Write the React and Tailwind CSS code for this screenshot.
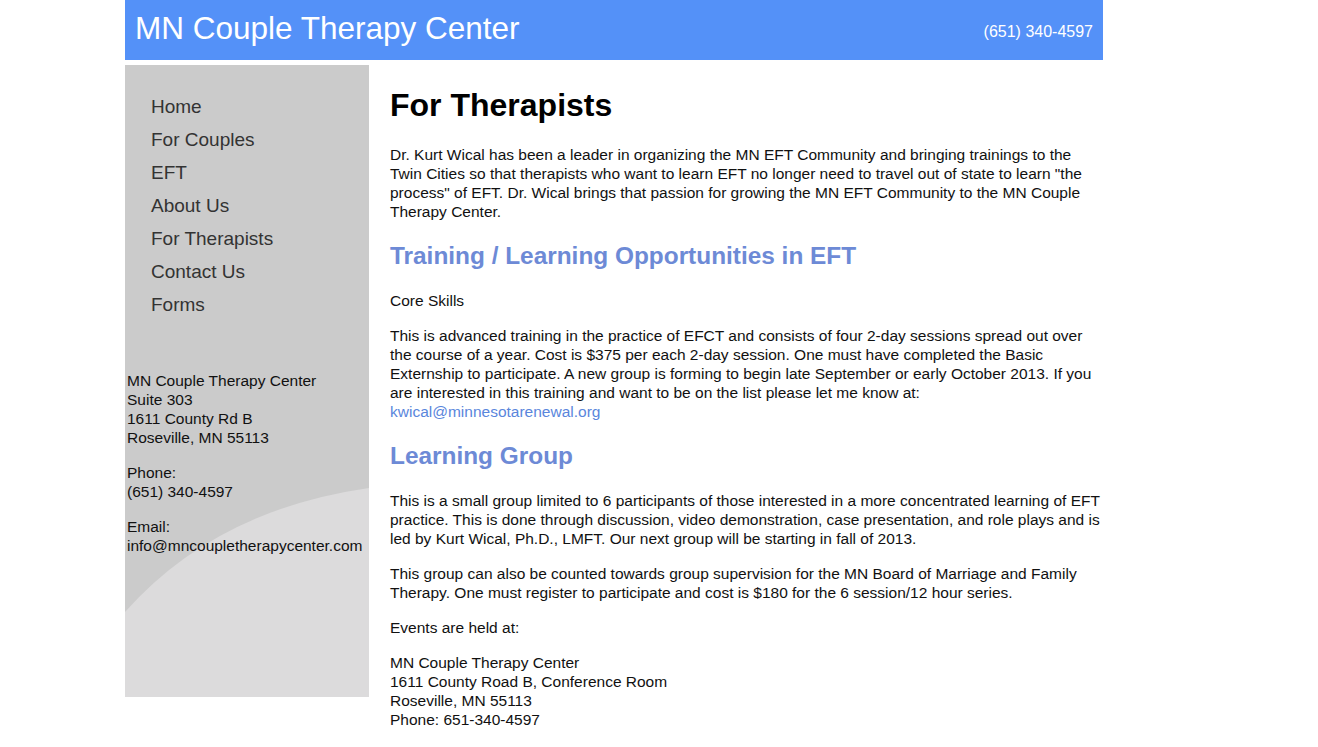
const navItems = ["Home", "For Couples", "EFT", "About Us", "For Therapists", "Contact Us", "Forms"];

const SidebarCurve = () => (
  <svg
    className="absolute inset-0 w-full h-full"
    viewBox="0 0 244 632"
    preserveAspectRatio="none"
    aria-hidden="true"
  >
    <path d="M0,547 Q90,445 244,423 L244,632 L0,632 Z" fill="#dcdbdc" />
  </svg>
);

export default function App() {
  return (
    <div className="min-h-screen bg-white font-['Liberation_Sans',Arial,sans-serif] text-[#111]">
      <div className="ml-[125px] w-[978px]">
        {/* Header */}
        <header className="flex h-[60px] items-center justify-between bg-[#5491f8] pl-[10px] pr-[10px] text-white">
          <h1 className="text-[31.5px] leading-[36px] -mt-[4px]">MN Couple Therapy Center</h1>
          <span className="text-[16px] leading-[19px] mt-[2px]">(651) 340-4597</span>
        </header>

        <div className="mt-[5px] flex items-start">
          {/* Sidebar */}
          <aside className="relative h-[632px] w-[244px] shrink-0 bg-[#cbcbcb]">
            <SidebarCurve />
            <div className="relative">
              <ul className="pt-[25px] pl-[26px]">
                {navItems.map((item) => (
                  <li key={item} className="text-[19px] leading-[33px] text-[#333]">
                    {item}
                  </li>
                ))}
              </ul>
              <div className="mt-[50px] pl-[2px] text-[15.5px] leading-[19px] text-[#111]">
                <p>
                  MN Couple Therapy Center
                  <br />
                  Suite 303
                  <br />
                  1611 County Rd B
                  <br />
                  Roseville, MN 55113
                </p>
                <p className="mt-[16px]">
                  Phone:
                  <br />
                  (651) 340-4597
                </p>
                <p className="mt-[16px]">
                  Email:
                  <br />
                  info@mncoupletherapycenter.com
                </p>
              </div>
            </div>
          </aside>

          {/* Main content */}
          <main className="w-[734px] pl-[21px] text-[15.5px] leading-[19px]">
            <h2 className="mt-[22px] mb-[21px] text-[32px] font-bold leading-[37px] text-black">For Therapists</h2>
            <p>
              Dr. Kurt Wical has been a leader in organizing the MN EFT Community and bringing trainings to the Twin
              Cities so that therapists who want to learn EFT no longer need to travel out of state to learn "the
              process" of EFT. Dr. Wical brings that passion for growing the MN EFT Community to the MN Couple Therapy
              Center.
            </p>

            <h3 className="my-[21px] text-[24.4px] font-bold leading-[28px] text-[#6d8ad6]">
              Training / Learning Opportunities in EFT
            </h3>
            <p className="mb-[16px]">Core Skills</p>
            <p>
              This is advanced training in the practice of EFCT and consists of four 2-day sessions spread out over the
              course of a year. Cost is $375 per each 2-day session. One must have completed the Basic Externship to
              participate. A new group is forming to begin late September or early October 2013. If you are interested
              in this training and want to be on the list please let me know at:
              <br />
              <a href="#" className="text-[#5a86dc]">
                kwical@minnesotarenewal.org
              </a>
            </p>

            <h3 className="my-[21px] text-[24.4px] font-bold leading-[28px] text-[#6d8ad6]">Learning Group</h3>
            <p className="mb-[16px]">
              This is a small group limited to 6 participants of those interested in a more concentrated learning of EFT
              practice. This is done through discussion, video demonstration, case presentation, and role plays and is
              led by Kurt Wical, Ph.D., LMFT. Our next group will be starting in fall of 2013.
            </p>
            <p className="mb-[16px]">
              This group can also be counted towards group supervision for the MN Board of Marriage and Family Therapy.
              One must register to participate and cost is $180 for the 6 session/12 hour series.
            </p>
            <p className="mb-[16px]">Events are held at:</p>
            <p className="mb-[16px]">
              MN Couple Therapy Center
              <br />
              1611 County Road B, Conference Room
              <br />
              Roseville, MN 55113
              <br />
              Phone: 651-340-4597
            </p>
          </main>
        </div>
      </div>
    </div>
  );
}
